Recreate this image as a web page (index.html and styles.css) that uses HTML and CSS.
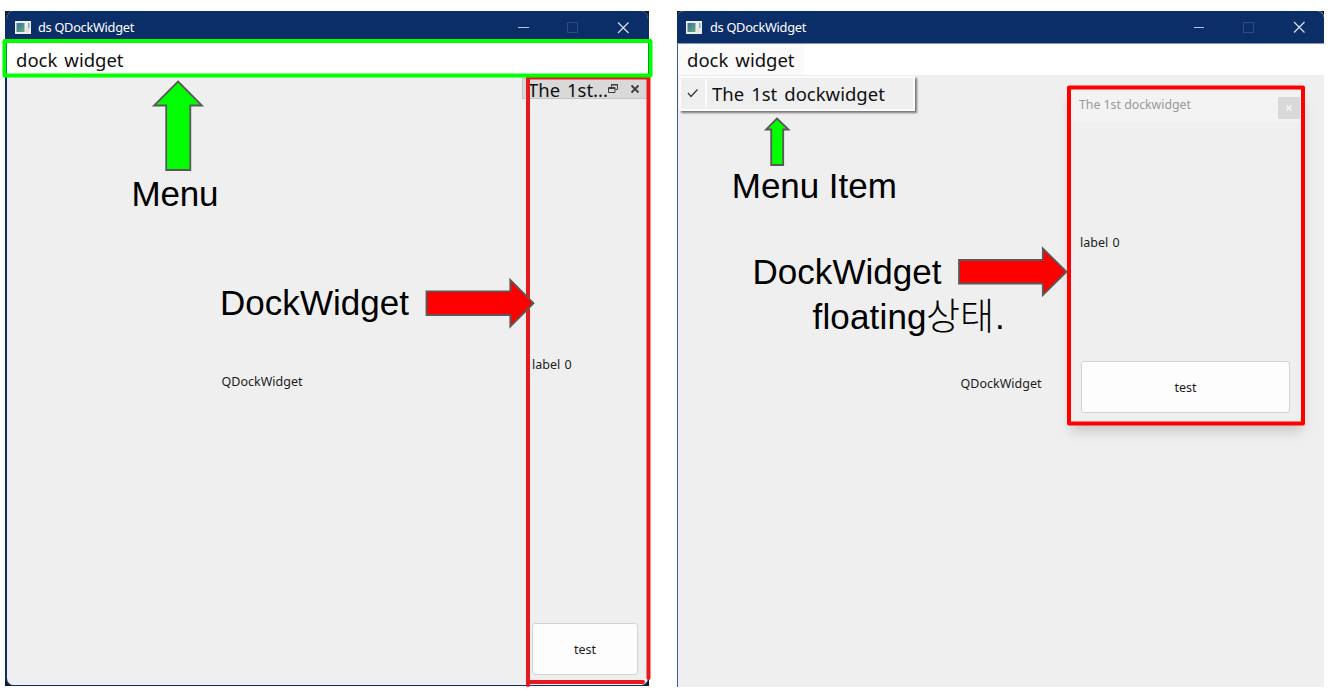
FILE: index.html
```html
<!DOCTYPE html>
<html lang="ko">
<head>
<meta charset="utf-8">
<title>ds QDockWidget</title>
<link rel="stylesheet" href="styles.css">
</head>
<body>
<main class="desk">
  <div class="backing">
  <section class="window docked">
    <header class="titlebar">
      <svg class="appicon" width="16" height="13" viewBox="0 0 16 13"><defs><linearGradient id="g" x1="0" y1="0" x2="1" y2="1"><stop offset="0" stop-color="#3d6d9c"/><stop offset="1" stop-color="#65ad79"/></linearGradient></defs><path fill="#eee" d="M0 0h16v13H0z"/><path fill="url(#g)" d="M1.500 2h8v9h-8z"/><path fill="#e2e2e2" d="M10.500 7.500h4v4h-4z"/><path fill="#7faaa0" d="M13 2h1.500v5H13z"/></svg>
      <span class="title">ds QDockWidget</span>
      <svg class="controls" width="112" height="12" viewBox="0 0 112 12" fill="none"><path stroke="#b8c2d8" d="M0 5.500h11"/><path stroke="#304d80" d="M49.500 .5h10v10h-10z"/><path stroke="#dce1ec" stroke-width="1.200" d="M100 .5l10.500 10.500M110.500 .5L100 11"/></svg>
    </header>
    <nav class="menubar"><span class="menu">dock widget</span></nav>
    <div class="content">
      <div class="central"><span class="small">QDockWidget</span></div>
      <aside class="dock">
        <div class="docktitle"><span class="dockname">The 1st...</span>
          <svg width="34" height="12" viewBox="0 0 34 12" fill="none" stroke="#3d3d3d"><path d="M2.500 4V1.500h6v5H6.500M2 2h7M-.5 4.500h6.500v5H-.5zM-.5 5.500h6.500"/><path stroke-width="1.800" d="M22.500 2.500l7 7M29.500 2.500l-7 7"/></svg>
        </div>
        <div class="dockbody"><span class="small label">label 0</span><button class="button small">test</button></div>
      </aside>
    </div>
  </section>
  </div>

  <div class="backing">
  <section class="window floating">
    <header class="titlebar">
      <svg class="appicon" width="16" height="13" viewBox="0 0 16 13"><path fill="#eee" d="M0 0h16v13H0z"/><path fill="url(#g)" d="M1.500 2h8v9h-8z"/><path fill="#e2e2e2" d="M10.500 7.500h4v4h-4z"/><path fill="#7faaa0" d="M13 2h1.500v5H13z"/></svg>
      <span class="title">ds QDockWidget</span>
      <svg class="controls" width="112" height="12" viewBox="0 0 112 12" fill="none"><path stroke="#b8c2d8" d="M-1 6.500h11"/><path stroke="#304d80" d="M49.500 1.500h10v10h-10z"/><path stroke="#dce1ec" stroke-width="1.200" d="M100 1l10.500 10.500M110.500 1l-10.500 10.500"/></svg>
    </header>
    <nav class="menubar"><span class="menu open">dock widget</span></nav>
    <div class="content">
      <div class="central"><span class="small">QDockWidget</span></div>
    </div>
    <div class="popup">
      <span class="check"><svg width="12" height="10" viewBox="0 0 12 10" fill="none" stroke="#333" stroke-width="1.200"><path d="M1 4l3 3.500L10.500 .5"/></svg></span>
      <span class="item">The 1st dockwidget</span>
    </div>
    <aside class="float">
      <div class="floattitle"><span class="floatname">The 1st dockwidget</span><span class="floatclose"><svg width="8" height="8" viewBox="0 0 8 8" stroke="#f4f4f4" stroke-width="1.600"><path d="M1.500 1.500l5 5M6.500 1.500l-5 5"/></svg></span></div>
      <div class="floatbody"><span class="small label">label 0</span><button class="button small">test</button></div>
    </aside>
  </section>
  </div>
</main>

<svg class="notes" width="1333" height="696" viewBox="0 0 1333 696">
  <g class="ink">
    <path class="crimson" d="M528 78V685M648.500 78V678M528 77.500h120M528 682h115"/>
    <rect class="lime" x="4.500" y="41" width="646" height="34.500"/>
    <rect class="red" x="1069" y="87.500" width="234" height="336"/>
  </g>
  <g class="arrow go">
    <path d="M178 81.500L202 105.500H190.300V170H166.200V105.500H154z"/>
    <path d="M777 118.500L788.500 129.500H783.200V165H771.200V129.500H766z"/>
  </g>
  <g class="arrow stop">
    <path d="M426.500 291.300H510.300V280L533.500 303.200L510.300 326.500V315H426.500z"/>
    <path d="M959 260H1042.800V248.500L1066.500 271.700L1042.800 295V283.500H959z"/>
  </g>
  <g class="caption">
    <text x="131.500" y="206" textLength="87">Menu</text>
    <text x="220" y="315" textLength="189">DockWidget</text>
    <text x="731.800" y="198" textLength="165">Menu Item</text>
    <text x="752.500" y="284" textLength="189">DockWidget</text>
    <text x="812.500" y="329" textLength="114">floating</text>
    <text class="hangul" x="926" y="330" textLength="68">상태</text>
    <text x="995" y="329">.</text>
  </g>
</svg>
</body>
</html>
```
FILE: styles.css
```css
* { box-sizing: border-box; }
body { margin: 0; width: 1333px; height: 696px; overflow: hidden; background: #fff; font-family: "Noto Sans", "Noto Sans CJK KR", sans-serif; color: #111; position: relative; }
.desk { display: flex; align-items: flex-start; gap: 28px; padding: 11px 9px 0 5px; }
.backing { background: #101820; }
.window { display: flex; flex-direction: column; position: relative; background: #efefef; }
.docked { width: 644px; height: 675px; border: solid #0c2e68; border-width: 0 1px 1px 2px; border-radius: 8px; overflow: hidden; }
.floating { width: 647px; height: 676px; border-left: 1px solid #3d5a92; border-radius: 6px 6px 0 0; }
.titlebar { height: 32px; flex: none; display: flex; align-items: center; background: #0c2e68; color: #fff; padding: 1px 18px 0 8px; }
.docked .titlebar { margin-left: -2px; padding-left: 10px; }
.floating .titlebar { height: 33px; margin-left: -1px; padding: 0 18px 0 9px; border-radius: 7px 7px 0 0; border-bottom: 1px solid #8493b4; }
.appicon { margin-right: 8px; }
.title { font-size: 12.8px; letter-spacing: -0.3px; flex: 1; white-space: nowrap; }
.docked .title { margin: -1px 0 0 -1px; letter-spacing: -0.3px; padding-right: 1px; }
.menubar { flex: none; display: flex; background: #fff; }
.docked .menubar { height: 34px; }
.floating .menubar { height: 31px; }
.menu { font-size: 18.5px; word-spacing: 2.200px; line-height: 34px; padding: 0 9px; white-space: nowrap; }
.open { width: 126px; height: 31px; line-height: 31px; background: #fafafa; }
.content { display: flex; flex: 1; min-height: 0; }
.central { flex: 1; display: flex; align-items: center; justify-content: center; }
.docked .central { padding-top: 2px; padding-right: 5px; }
.floating .central { padding-top: 6px; }
.small { font-size: 12.5px; line-height: 18px; font-family: "Noto Sans", sans-serif; color: #1b1b1b; }
.dock { width: 126px; display: flex; flex-direction: column; padding-top: 1px; }
.docktitle { height: 21px; flex: none; display: flex; align-items: center; background: #d9d9d9; border: 1px solid #c4c4c4; border-right: 0; padding-left: 5px; gap: 2px; white-space: nowrap; }
.dockname { font-size: 18.5px; word-spacing: 2px; line-height: 20px; width: 79px; padding-top: 2px; }
.docktitle svg { overflow: visible; }
.dockbody { flex: 1; display: flex; flex-direction: column; padding: 13px 10px 10px; gap: 6px; }
.label { flex: 1; display: flex; align-items: center; word-spacing: 1px; }
.button { height: 52px; padding-top: 3px; background: #fdfdfd; border: 1px solid #d3d3d3; border-radius: 3px; }
.popup { position: absolute; left: 1px; top: 65px; width: 236px; height: 35px; display: flex; padding: 1px; background: #efefef; border: 2px solid #fbfbfb; box-shadow: 2px 2px 2px #777; }
.check { width: 25px; display: flex; align-items: center; justify-content: center; border-right: 2px solid #fafafa; padding-right: 2px; }
.item { font-size: 18.5px; word-spacing: 2.200px; line-height: 29px; padding-left: 5px; white-space: nowrap; }
.float { position: absolute; left: 393px; top: 79px; width: 231px; height: 332px; display: flex; flex-direction: column; background: #efefef; box-shadow: 0 9px 12px rgba(0,0,0,.18); }
.floattitle { height: 32px; display: flex; justify-content: space-between; align-items: center; background: #f3f3f3; padding: 0 2px 0 8px; }
.floatname { font-size: 12.3px; color: #999; line-height: 18px; margin-top: -2px; }
.floatclose { width: 22px; height: 22px; margin-top: 3px; display: flex; align-items: center; justify-content: center; background: #d9d9d9; }
.floatbody { flex: 1; display: flex; flex-direction: column; padding: 3px 12px 9px 10px; }
.floatbody .label { margin-left: -1px; }
.notes { position: absolute; left: 0; top: 0; }
.ink { fill: none; stroke-width: 4; stroke-linejoin: round; stroke-linecap: round; }
.crimson { stroke: #e61a1d; }
.lime { stroke: #0f0; }
.red { stroke: #f00; }
.arrow { stroke: #595959; stroke-width: 1.800; }
.go { fill: #0f0; }
.stop { fill: #f00; }
.caption { font-family: "Liberation Sans", "Noto Sans CJK KR", sans-serif; font-size: 35px; fill: #000; }
.hangul { font-family: "Noto Sans CJK KR", sans-serif; font-weight: 300; font-size: 37px; }
```
